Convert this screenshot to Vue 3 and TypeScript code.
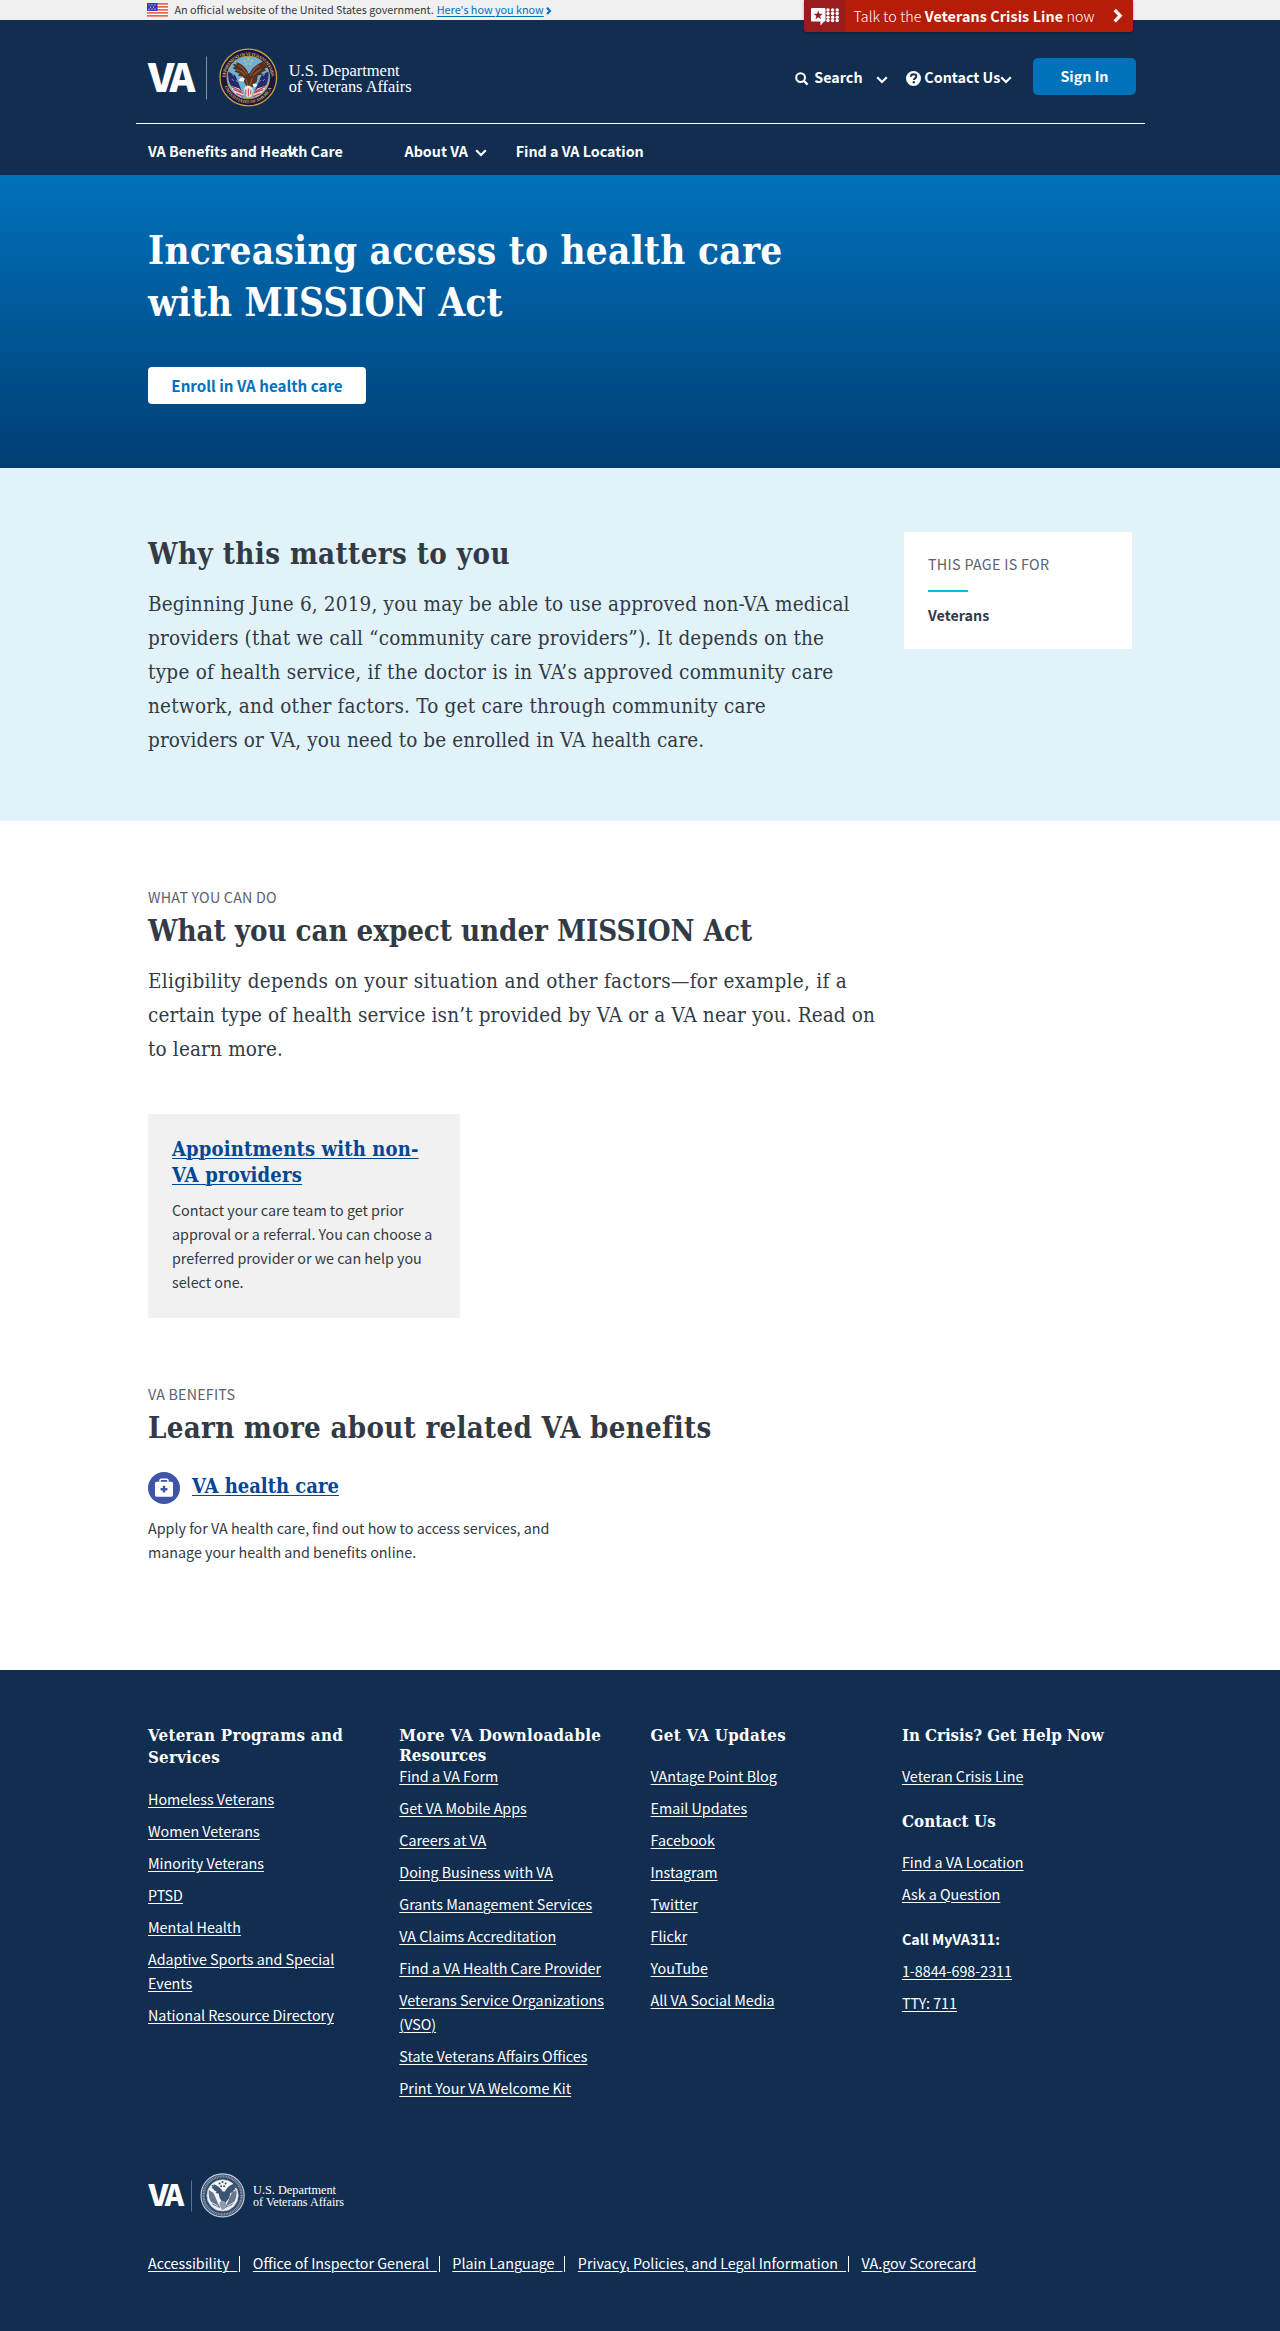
<script setup lang="ts">
interface Line {
  text: string
  ls: number
}

interface FooterGroup {
  title: Line[]
  tight?: boolean
  links: string[]
}

const heroTitle: Line[] = [
  { text: 'Increasing access to health care', ls: 0.26 },
  { text: 'with MISSION Act', ls: 0.1 },
]

const whyText: Line[] = [
  { text: 'Beginning June 6, 2019, you may be able to use approved non-VA medical', ls: 0.175 },
  { text: 'providers (that we call “community care providers”). It depends on the', ls: 0.165 },
  { text: 'type of health service, if the doctor is in VA’s approved community care', ls: 0.255 },
  { text: 'network, and other factors. To get care through community care', ls: 0.225 },
  { text: 'providers or VA, you need to be enrolled in VA health care.', ls: 0.095 },
]

const expectText: Line[] = [
  { text: 'Eligibility depends on your situation and other factors—for example, if a', ls: 0.295 },
  { text: 'certain type of health service isn’t provided by VA or a VA near you. Read on', ls: 0.125 },
  { text: 'to learn more.', ls: 0.16 },
]

const cardTitle: Line[] = [
  { text: 'Appointments with non-', ls: 0.15 },
  { text: 'VA providers', ls: 0.2 },
]

const footerColumns: FooterGroup[][] = [
  [
    {
      title: [
        { text: 'Veteran Programs and', ls: 0.3 },
        { text: 'Services', ls: 0.2 },
      ],
      links: [
        'Homeless Veterans',
        'Women Veterans',
        'Minority Veterans',
        'PTSD',
        'Mental Health',
        'Adaptive Sports and Special Events',
        'National Resource Directory',
      ],
    },
  ],
  [
    {
      title: [
        { text: 'More VA Downloadable', ls: 0.3 },
        { text: 'Resources', ls: 0 },
      ],
      tight: true,
      links: [
        'Find a VA Form',
        'Get VA Mobile Apps',
        'Careers at VA',
        'Doing Business with VA',
        'Grants Management Services',
        'VA Claims Accreditation',
        'Find a VA Health Care Provider',
        'Veterans Service Organizations (VSO)',
        'State Veterans Affairs Offices',
        'Print Your VA Welcome Kit',
      ],
    },
  ],
  [
    {
      title: [{ text: 'Get VA Updates', ls: 0.3 }],
      links: [
        'VAntage Point Blog',
        'Email Updates',
        'Facebook',
        'Instagram',
        'Twitter',
        'Flickr',
        'YouTube',
        'All VA Social Media',
      ],
    },
  ],
  [
    { title: [{ text: 'In Crisis? Get Help Now', ls: -0.05 }], links: ['Veteran Crisis Line'] },
    { title: [{ text: 'Contact Us', ls: 0.1 }], links: ['Find a VA Location', 'Ask a Question'] },
  ],
]

const phoneLinks: string[] = ['1-8844-698-2311', 'TTY: 711']

const legalLinks: string[] = [
  'Accessibility',
  'Office of Inspector General',
  'Plain Language',
  'Privacy, Policies, and Legal Information',
  'VA.gov Scorecard',
]

const dotColumns: number[] = [17, 21.6, 26.2]
const dotRows: number[] = [2, 5.6, 9.2, 12.6]
</script>

<template>
  <div class="page">
    <div class="gov">
      <div class="gov-inner">
        <svg class="flag" width="21" height="14" viewBox="0 0 21 14">
          <rect width="21" height="14" fill="#fff" />
          <g fill="#f0614a">
            <rect y="0" width="21" height="1.7" />
            <rect y="3" width="21" height="1.7" />
            <rect y="6" width="21" height="1.7" />
            <rect y="9" width="21" height="1.7" />
            <rect y="12" width="21" height="1.7" />
          </g>
          <rect width="10.5" height="8" fill="#3335c4" />
          <g fill="#fff">
            <circle cx="2" cy="1.8" r=".6" /><circle cx="5" cy="1.8" r=".6" /><circle cx="8" cy="1.8" r=".6" />
            <circle cx="3.5" cy="4" r=".6" /><circle cx="6.5" cy="4" r=".6" />
            <circle cx="2" cy="6.2" r=".6" /><circle cx="5" cy="6.2" r=".6" /><circle cx="8" cy="6.2" r=".6" />
          </g>
        </svg>
        <span>An official website of the United States government.</span>
        <a class="gov-link">Here's how you know</a>
        <svg class="gov-caret" width="6" height="8" viewBox="0 0 6 8">
          <path d="M1 .8l3 3.100-3 3.100" fill="none" stroke="#0071bb" stroke-width="2.100" />
        </svg>
      </div>
      <div class="crisis">
        <div class="crisis-icon">
          <svg width="29" height="18" viewBox="0 0 29 18">
            <path d="M1 0h12.500a1 1 0 0 1 1 1v11.500a1 1 0 0 1-1 1h-.5l-3.500 4v-4H1a1 1 0 0 1-1-1V1a1 1 0 0 1 1-1z" fill="#fff" />
            <path d="M7.200 2.400l1.150 3.300 3.500.1-2.800 2.100 1 3.350-2.850-2-2.850 2 1-3.350-2.800-2.100 3.500-.1z" fill="#981b1e" />
            <g fill="#fff">
              <template v-for="y in dotRows" :key="y">
                <circle v-for="x in dotColumns" :key="x" :cx="x" :cy="y" r="1.75" />
              </template>
            </g>
          </svg>
        </div>
        <span class="crisis-text">Talk to the <b>Veterans Crisis Line</b> now</span>
        <svg class="crisis-arrow" width="10" height="16" viewBox="0 0 10 16">
          <path d="M1.700 2l5.500 5.700-5.500 5.700" fill="none" stroke="#fff" stroke-width="3.300" />
        </svg>
      </div>
    </div>

    <header class="header">
      <div class="brand-row">
        <svg class="logo" width="270" height="60" viewBox="0 0 270 60">
          <defs>
            <path id="ring-top" d="M6.200 33a23 23 0 1 1 45.600 0" />
            <path id="ring-bottom" d="M4.200 33a25 25 0 0 0 49.600 0" />
          </defs>
          <text y="43.500" class="logo-va" font-size="39.500"><tspan x="0" textLength="26.500" lengthAdjust="spacingAndGlyphs">V</tspan><tspan x="21.500" textLength="25.800" lengthAdjust="spacingAndGlyphs">A</tspan></text>
          <rect x="58" y="8.500" width="1" height="43" fill="#8292a5" />
          <g transform="translate(71.300 .5)">
            <circle cx="29" cy="29" r="28.300" fill="#1b1540" stroke="#c9a03f" stroke-width="1.300" />
            <circle cx="29" cy="29" r="21.300" fill="#6bb2d6" stroke="#c9a03f" stroke-width=".9" />
            <text class="ring" font-size="4.400" fill="#d5b35c">
              <textPath href="#ring-top" textLength="69" startOffset="4">DEPARTMENT OF VETERANS AFFAIRS</textPath>
            </text>
            <text class="ring" font-size="4.400" fill="#d5b35c">
              <textPath href="#ring-bottom" textLength="60" startOffset="5">UNITED STATES OF AMERICA</textPath>
            </text>
            <g fill="#e8c53c">
              <circle cx="29" cy="10.500" r="1.100" /><circle cx="25.400" cy="12.500" r="1.100" /><circle cx="32.600" cy="12.500" r="1.100" />
              <circle cx="27" cy="15.500" r="1.100" /><circle cx="31" cy="15.500" r="1.100" />
            </g>
            <path d="M9 23l7 4 5 12 3 7-9-4c-5-5-7-12-6-19zM49 23l-7 4-5 12-3 7 9-4c5-5 7-12 6-19z" fill="#272a66" />
            <path d="M11 37l9 3 5 6-4 2c-4-2-8-5-10-11zM47 37l-9 3-5 6 4 2c4-2 8-5 10-11z" fill="#d9dde6" />
            <path d="M12 38l10 5M14 41l10 4M17 45l7 3M46 38l-10 5M44 41l-10 4M41 45l-7 3" stroke="#c43443" stroke-width="1.200" />
            <path d="M13 26l1 1M13 31l1 1M17 32l1 1M45 26l-1 1M45 31l-1 1M41 32l-1 1" stroke="#fff" stroke-width="1" />
            <path d="M29 25c-1-4-5-9-12-11.500l.5 2.500-4-.5 2 3-2.500 1 4 2-2 1.500 5 2-1.500 2 5 1 1 5 3 5 1 5h2l3-5 4-5 1-6 5-1-1.500-2 5-2-2-1.500 4-2-2.500-1 2-3-4 .5.500-2.500c-7 2.500-13 8-14 11.500z" fill="#57301e" />
            <path d="M28 26c-2-3-4-7-9-9M31 27c2-4 4-8 9-10M26 27c-2-3-5-5-9-6M34 27c2-3 5-5 8-6M27 31l2 8M33 30l-3 8" fill="none" stroke="#94593a" stroke-width="1.100" />
            <path d="M19.500 32c1-3 4-4 6-2l-1 3-3 0zM33 36c2-2 5-1 5 1l-3 2z" fill="#f3f3f0" />
            <path d="M25 39l3-2 4 1 2 4-2 6-4 1-3-6z" fill="#eceae6" />
            <path d="M26.500 41v5M29 40v8M31.500 41v5" stroke="#c43443" stroke-width="1" />
            <path d="M26 44l-3 3M33 43l2 4" stroke="#e8c53c" stroke-width="1" />
          </g>
          <text x="140.700" y="28" class="logo-serif" font-size="17" textLength="111" lengthAdjust="spacingAndGlyphs">U.S. Department</text>
          <text x="140.700" y="44" class="logo-serif" font-size="17" textLength="123" lengthAdjust="spacingAndGlyphs">of Veterans Affairs</text>
        </svg>
        <div class="tools">
          <svg class="search-icon" width="14" height="14" viewBox="0 0 14 14">
            <circle cx="5.600" cy="5.600" r="4.400" fill="none" stroke="#fff" stroke-width="2" />
            <path d="M8.800 8.800l3.800 3.800" stroke="#fff" stroke-width="2.200" />
          </svg>
          <span class="search-label">Search</span>
          <svg class="search-chev" width="12" height="8" viewBox="0 0 12 8">
            <path d="M1.200 1.300L6 6l4.800-4.700" fill="none" stroke="#fff" stroke-width="2.200" />
          </svg>
          <svg class="help-icon" width="15" height="15" viewBox="0 0 15 15">
            <circle cx="7.500" cy="7.500" r="7.500" fill="#fff" />
            <path d="M4.900 5.700C5 4 6.200 3.200 7.600 3.200c1.500 0 2.700.9 2.700 2.300 0 1.900-2.400 1.800-2.400 3.400" fill="none" stroke="#112e51" stroke-width="1.900" />
            <rect x="6.700" y="10.200" width="2.200" height="2.100" fill="#112e51" />
          </svg>
          <span class="contact-label">Contact Us</span>
          <svg class="contact-chev" width="12" height="8" viewBox="0 0 12 8">
            <path d="M1.200 1.300L6 6l4.800-4.700" fill="none" stroke="#fff" stroke-width="2.200" />
          </svg>
          <button class="sign-in">Sign In</button>
        </div>
      </div>
      <nav class="nav">
        <span class="nav-benefits">VA Benefits and Health Care
          <svg class="nav-over" width="12" height="8" viewBox="0 0 12 8">
            <path d="M1.200 1.300L6 6l4.800-4.700" fill="none" stroke="#fff" stroke-width="2.200" />
          </svg>
        </span>
        <span class="nav-about">About VA</span>
        <svg class="nav-chev" width="12" height="8" viewBox="0 0 12 8">
          <path d="M1.200 1.300L6 6l4.800-4.700" fill="none" stroke="#fff" stroke-width="2.200" />
        </svg>
        <span>Find a VA Location</span>
      </nav>
    </header>

    <section class="hero">
      <h1>
        <span v-for="l in heroTitle" :key="l.text" class="line" :style="{ letterSpacing: l.ls + 'px' }">{{ l.text }}</span>
      </h1>
      <a class="enroll">Enroll in VA health care</a>
    </section>

    <section class="why">
      <div class="why-copy">
        <h2 class="h2-why">Why this matters to you</h2>
        <p class="intro">
          <span v-for="l in whyText" :key="l.text" class="line" :style="{ letterSpacing: l.ls + 'px' }">{{ l.text }}</span>
        </p>
      </div>
      <aside class="audience">
        <div class="audience-head">THIS PAGE IS FOR</div>
        <div class="audience-rule"></div>
        <b>Veterans</b>
      </aside>
    </section>

    <main class="main">
      <div class="eyebrow">WHAT YOU CAN DO</div>
      <h2 class="h2-expect">What you can expect under MISSION Act</h2>
      <p class="intro">
        <span v-for="l in expectText" :key="l.text" class="line" :style="{ letterSpacing: l.ls + 'px' }">{{ l.text }}</span>
      </p>

      <div class="card">
        <h3>
          <span v-for="l in cardTitle" :key="l.text" class="line"><a class="blue-link" :style="{ letterSpacing: l.ls + 'px' }">{{ l.text }}</a></span>
        </h3>
        <p>Contact your care team to get prior approval or a referral. You can choose a preferred provider or we can help you select one.</p>
      </div>

      <div class="eyebrow eyebrow-benefits">VA BENEFITS</div>
      <h2 class="h2-learn">Learn more about related VA benefits</h2>
      <div class="benefit">
        <svg width="32" height="32" viewBox="0 0 32 32">
          <circle cx="16" cy="16" r="16" fill="#4055a7" />
          <path d="M12 10V8.500a1.200 1.200 0 0 1 1.200-1.200h5.600A1.200 1.200 0 0 1 20 8.500V10" fill="none" stroke="#fff" stroke-width="1.500" />
          <rect x="7" y="9.700" width="18" height="15" rx="1.600" fill="#fff" />
          <path d="M16 13.800v6.800M12.600 17.200h6.800" stroke="#4055a7" stroke-width="2.400" />
        </svg>
        <h3><a class="blue-link">VA health care</a></h3>
      </div>
      <p class="benefit-text">Apply for VA health care, find out how to access services, and manage your health and benefits online.</p>
    </main>

    <footer class="footer">
      <div class="columns">
        <div v-for="(groups, ci) in footerColumns" :key="ci" class="column">
          <div v-for="(g, gi) in groups" :key="gi" class="group" :class="{ two: g.title.length > 1, tight: g.tight }">
            <h4>
              <span v-for="l in g.title" :key="l.text" class="line" :style="{ letterSpacing: l.ls + 'px' }">{{ l.text }}</span>
            </h4>
            <ul>
              <li v-for="link in g.links" :key="link"><a>{{ link }}</a></li>
            </ul>
          </div>
          <ul v-if="ci === 3" class="group">
            <li><b>Call MyVA311:</b></li>
            <li v-for="p in phoneLinks" :key="p"><a>{{ p }}</a></li>
          </ul>
        </div>
      </div>

      <svg class="footer-logo" width="200" height="46" viewBox="0 0 200 46">
        <text y="32.500" class="logo-va" font-size="29"><tspan x="0.500" textLength="20" lengthAdjust="spacingAndGlyphs">V</tspan><tspan x="16.700" textLength="19.400" lengthAdjust="spacingAndGlyphs">A</tspan></text>
        <rect x="43" y="7.500" width="1" height="31" fill="#5f7289" />
        <g transform="translate(52.500 .3) scale(.762)">
          <circle cx="29" cy="29" r="28.300" fill="#31496a" stroke="#c3cbd6" stroke-width="1.600" />
          <circle cx="29" cy="29" r="25" fill="none" stroke="#8d9bad" stroke-width="3.200" stroke-dasharray="1.300 .8" />
          <circle cx="29" cy="29" r="20.500" fill="#f4f6f8" stroke="#c3cbd6" stroke-width="1" />
          <path d="M11 22l6 4 5 11 4 9-9-4c-5-5-7-12-6-20zM47 22l-6 4-5 11-4 9 9-4c5-5 7-12 6-20z" fill="#64778f" />
          <path d="M29 24c-2-4-6-8-12-10l1 2-4-1 2 3-2 1 4 2-1 1 4 2-1 2 4 1 1 5 3 5 1 5h2l3-5 4-5 1-6 4-1 0-2 3-2-1-1 3-2-2-1 2-2-4 0 1-2c-6 2-11 6-13 11z" fill="#3d5573" />
          <path d="M25 38l3-2 4 1 2 4-2 6-4 1-3-6z" fill="#8b9aae" />
          <path d="M14 38l9 5M44 38l-9 5M18 43l6 3M40 43l-6 3" stroke="#dfe4ea" stroke-width="1.200" />
          <g fill="#31496a">
            <circle cx="29" cy="11.500" r="1.300" /><circle cx="25" cy="13.500" r="1.300" /><circle cx="33" cy="13.500" r="1.300" />
            <circle cx="27" cy="17" r="1.300" /><circle cx="31" cy="17" r="1.300" />
          </g>
        </g>
        <text x="105" y="21" class="logo-serif" font-size="12.600" textLength="83" lengthAdjust="spacingAndGlyphs">U.S. Department</text>
        <text x="105" y="33" class="logo-serif" font-size="12.600" textLength="91" lengthAdjust="spacingAndGlyphs">of Veterans Affairs</text>
      </svg>

      <div class="legal">
        <span v-for="(l, i) in legalLinks" :key="l" class="legal-item">
          <a>{{ l }}<span v-if="i < legalLinks.length - 1" class="tail">&nbsp;&nbsp;</span></a>
          <i v-if="i < legalLinks.length - 1" class="bar"></i>
        </span>
      </div>
    </footer>
  </div>
</template>

<style>
body {
  margin: 0;
}
</style>

<style scoped>
.page {
  width: 1280px;
  height: 2331px;
  overflow: hidden;
  display: flex;
  flex-direction: column;
  background: #fff;
  color: #323a45;
  font-family: "Noto Sans CJK SC", "Noto Sans", sans-serif;
  font-size: 14.3px;
  line-height: 24px;
}
h1, h2, h3, h4, p, ul {
  margin: 0;
  padding: 0;
}
ul {
  list-style: none;
}
h1, h2, h3, h4, .intro {
  font-family: "DejaVu Serif Condensed", "DejaVu Serif", serif;
  font-stretch: condensed;
}
.line {
  display: block;
  white-space: nowrap;
}
svg {
  display: block;
  flex: none;
  overflow: visible;
}

/* government banner */
.gov {
  position: relative;
  height: 20px;
  flex: none;
  background: #f0f0f0;
}
.gov-inner {
  display: flex;
  padding-left: 147px;
  font-size: 10.8px;
  line-height: 18.500px;
}
.flag {
  margin: 3px 6.500px 0 0;
}
.gov-link {
  margin-left: 3px;
  color: #0071bb;
  text-decoration: underline;
  text-decoration-thickness: 1px;
  text-underline-offset: 1.500px;
}
.gov-caret {
  margin: 7px 0 0 2px;
}
.crisis {
  position: absolute;
  z-index: 2;
  top: 0;
  left: 804px;
  width: 328.500px;
  height: 32px;
  display: flex;
  overflow: hidden;
  border-radius: 0 0 3px 3px;
  background: #b51d09;
  box-shadow: 0 1px 3px rgba(0, 0, 0, 0.35);
  color: #fff;
}
.crisis-icon {
  width: 40.500px;
  box-sizing: border-box;
  padding: 8px 0 0 7px;
  background: #981b1e;
}
.crisis-text {
  margin-left: 9px;
  width: 259px;
  line-height: 32px;
  font-weight: 300;
  letter-spacing: 0.1px;
  white-space: nowrap;
}
.crisis-text b {
  font-weight: 700;
}
.crisis-arrow {
  margin-top: 8px;
}

/* header */
.header {
  height: 155px;
  flex: none;
  background: #112e51;
  color: #fff;
  font-weight: 700;
}
.brand-row {
  display: flex;
  justify-content: space-between;
  width: 1009px;
  height: 103px;
  margin-left: 136px;
  box-sizing: content-box;
  border-bottom: 1px solid #fff;
}
.logo {
  margin: 27.500px 0 0 12.300px;
}
.logo-va {
  font-family: "Noto Sans CJK SC", "Noto Sans", sans-serif;
  font-weight: 900;
  fill: #fff;
}
.logo-serif {
  font-family: "Liberation Serif", serif;
  font-weight: 400;
  fill: #fff;
}
.ring {
  font-family: "Liberation Serif", serif;
  font-weight: 700;
}
.tools {
  display: flex;
  margin-right: 9px;
}
.search-icon {
  margin: 52px 5px 0 0;
}
.search-label, .contact-label {
  line-height: 24px;
  padding-top: 45px;
  white-space: nowrap;
}
.search-label {
  width: 61.500px;
}
.search-chev {
  margin: 55.500px 18px 0 0;
}
.help-icon {
  margin: 51px 3.500px 0 0;
}
.contact-label {
  width: 75.700px;
}
.contact-chev {
  margin-top: 55.500px;
}
.sign-in {
  width: 103px;
  height: 37px;
  margin: 38px 0 0 21px;
  padding: 0 0 2px;
  border: 0;
  border-radius: 5px;
  background: #0071bb;
  color: #fff;
  font: 700 14.300px/35px "Noto Sans CJK SC", "Noto Sans", sans-serif;
}
.nav {
  display: flex;
  padding: 14.500px 0 0 148px;
}
.nav-benefits {
  position: relative;
  width: 256.500px;
}
.nav-over {
  position: absolute;
  left: 137.500px;
  top: 9px;
}
.nav-chev {
  margin: 10px 28.800px 0 7px;
}

/* hero */
.hero {
  height: 293px;
  flex: none;
  box-sizing: border-box;
  padding: 50px 0 0 148px;
  background: linear-gradient(#0071bb, #003e73);
  color: #fff;
}
.hero h1 {
  font-size: 38.400px;
  line-height: 52px;
}
.enroll {
  display: block;
  width: 218px;
  margin-top: 38px;
  border-radius: 4px;
  background: #fff;
  color: #0071bb;
  font-size: 15.150px;
  font-weight: 700;
  line-height: 37px;
  text-align: center;
}

h2 {
  font-size: 29.200px;
  line-height: 38px;
}
.h2-why {
  letter-spacing: 0.42px;
}
.h2-expect {
  letter-spacing: -0.04px;
}
.h2-learn {
  letter-spacing: 0.29px;
  padding-top: 1px;
}
.intro {
  margin-top: 14px;
  font-size: 20.500px;
  line-height: 34px;
}

/* why this matters */
.why {
  display: flex;
  height: 353px;
  flex: none;
  box-sizing: border-box;
  padding: 64px 0 0 148px;
  background: #e1f3f8;
}
.why-copy {
  width: 756px;
  padding-top: 3px;
}
.audience {
  width: 228px;
  height: 117px;
  box-sizing: border-box;
  padding: 20px 24px 0;
  background: #fff;
}
.audience-head {
  color: #5b616b;
  letter-spacing: 0.3px;
}
.audience-rule {
  width: 40px;
  height: 2px;
  margin: 14px 0 11px;
  background: #00bfe7;
}
.audience b {
  display: block;
}

/* main */
.main {
  height: 849px;
  flex: none;
  box-sizing: border-box;
  padding: 64px 0 0 148px;
}
.eyebrow {
  margin-bottom: 2.700px;
  color: #5b616b;
  letter-spacing: 0.2px;
}
.card {
  width: 312px;
  height: 204px;
  margin-top: 48px;
  box-sizing: border-box;
  padding: 22px 24px 0;
  background: #f1f1f1;
}
h3 {
  font-size: 20px;
  line-height: 26px;
}
.card p {
  margin-top: 10px;
  width: 264px;
}
.blue-link {
  color: #004795;
  text-decoration: underline;
  text-decoration-thickness: 1px;
  text-underline-offset: 2px;
}
.eyebrow-benefits {
  margin-top: 64px;
}
.benefit {
  display: flex;
  margin-top: 25px;
}
.benefit h3 {
  margin: 1px 0 0 12px;
}
.benefit-text {
  width: 425px;
  margin-top: 12px;
}

/* footer */
.footer {
  flex: 1;
  background: #112e51;
  color: #fff;
  padding: 53px 0 0 148px;
}
.columns {
  display: flex;
  height: 450px;
}
.column {
  width: 251.300px;
}
.group + .group {
  margin-top: 21px;
}
h4 {
  padding-top: 1px;
  font-size: 16.800px;
  line-height: 22px;
}
.group h4 {
  margin-bottom: 18px;
}
.group.two h4 {
  margin-bottom: 19px;
}
.group.tight h4 {
  padding-top: 2px;
  margin-bottom: -1px;
  line-height: 20px;
}
.columns li {
  max-width: 207px;
  margin-bottom: 8px;
}
.columns li:last-child {
  margin-bottom: 0;
}
.footer a {
  text-decoration: underline;
  text-decoration-thickness: 1px;
  text-underline-offset: 2px;
}
.footer-logo {
  margin-bottom: 32px;
}
.legal {
  display: flex;
}
.legal-item {
  display: flex;
  white-space: nowrap;
}
.tail {
  letter-spacing: 0.8px;
}
.bar {
  width: 1px;
  height: 16px;
  margin: 5px 12.400px 0 2px;
  background: #fff;
}
</style>
